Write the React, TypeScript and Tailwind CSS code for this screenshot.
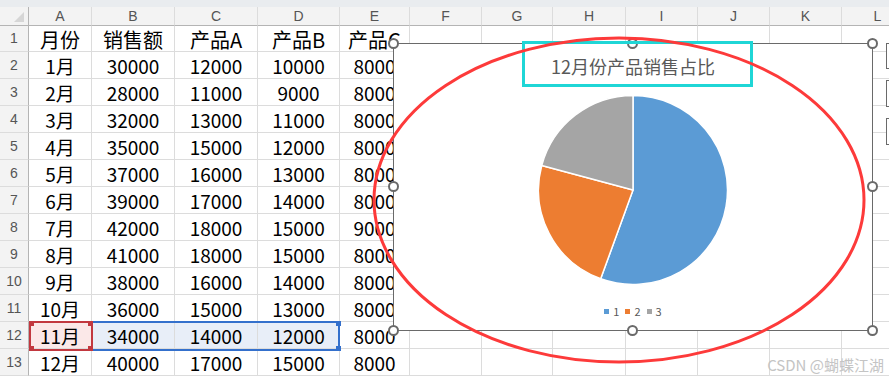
import React from "react";

const cols = ["A", "B", "C", "D", "E", "F", "G", "H", "I", "J", "K", "L"];

const rows: string[][] = [
  ["月份", "销售额", "产品A", "产品B", "产品C"],
  ["1月", "30000", "12000", "10000", "8000"],
  ["2月", "28000", "11000", "9000", "8000"],
  ["3月", "32000", "13000", "11000", "8000"],
  ["4月", "35000", "15000", "12000", "8000"],
  ["5月", "37000", "16000", "13000", "8000"],
  ["6月", "39000", "17000", "14000", "8000"],
  ["7月", "42000", "18000", "15000", "9000"],
  ["8月", "41000", "18000", "15000", "8000"],
  ["9月", "38000", "16000", "14000", "8000"],
  ["10月", "36000", "15000", "13000", "8000"],
  ["11月", "34000", "14000", "12000", "8000"],
  ["12月", "40000", "17000", "15000", "8000"],
];

const gridCols =
  "grid grid-cols-[29px_63px_83px_83px_82px_70px_72px_71px_73px_72px_72px_72px_72px]";

// 12月 data: 40000 / 17000 / 15000
const slices = [
  { v: 40000, color: "#5b9bd5" },
  { v: 17000, color: "#ed7d31" },
  { v: 15000, color: "#a5a5a5" },
];

function slicePath(cx: number, cy: number, r: number, a0: number, a1: number) {
  const p = (a: number) => [cx + r * Math.sin(a), cy - r * Math.cos(a)];
  const [x0, y0] = p(a0);
  const [x1, y1] = p(a1);
  const large = a1 - a0 > Math.PI ? 1 : 0;
  return `M${cx},${cy} L${x0},${y0} A${r},${r} 0 ${large} 1 ${x1},${y1} Z`;
}

function Pie() {
  const total = slices.reduce((s, x) => s + x.v, 0);
  let a = 0;
  return (
    <svg width="190" height="190" viewBox="0 0 190 190">
      {slices.map((s, i) => {
        const a0 = a;
        a += (s.v / total) * Math.PI * 2;
        return (
          <path
            key={i}
            d={slicePath(95, 95, 94.5, a0, a)}
            fill={s.color}
            stroke="#ffffff"
            strokeWidth="1.5"
            strokeLinejoin="round"
          />
        );
      })}
    </svg>
  );
}

const handle =
  "absolute w-[11px] h-[11px] rounded-full border-2 border-[#6a6a6a] bg-white";
const redSq = "absolute w-[5px] h-[5px] bg-[#c2383f]";
const blueSq = "absolute w-[5px] h-[5px] bg-[#3470cc]";

export default function App() {
  return (
    <div
      className="relative w-[889px] h-[380px] overflow-hidden bg-white"
      style={{ fontFamily: '"Noto Sans CJK SC", "Noto Sans", sans-serif' }}
    >
      <div className="h-[7px] bg-[#e9ecef]" />

      {/* column header */}
      <div className={gridCols}>
        <div className="h-[19px] bg-[#f3f3f3] border-b border-r border-[#b4b4b4] flex items-end justify-end pr-[4px] pb-[3px]">
          <div className="w-0 h-0 border-l-[10px] border-l-transparent border-b-[10px] border-b-[#d6d6d6]" />
        </div>
        {cols.map((c) => (
          <div
            key={c}
            className="h-[19px] bg-[#f3f3f3] border-b border-[#b4b4b4] border-r border-r-[#dcdcdc] flex items-center justify-center text-[14px] text-[#555] font-['Liberation_Sans']"
          >
            {c}
          </div>
        ))}
      </div>

      {/* rows */}
      {Array.from({ length: 13 }).map((_, r) => (
        <div key={r} className={gridCols}>
          <div
            className={`${r === 0 ? "h-[26px]" : "h-[27px]"} bg-[#f3f3f3] border-r border-[#b4b4b4] border-b border-b-[#dcdcdc] flex items-center justify-center text-[14px] text-[#555] font-['Liberation_Sans']`}
          >
            {r + 1}
          </div>
          {cols.map((c, ci) => {
            const txt = rows[r][ci] ?? "";
            let bg = "";
            if (r === 11 && ci === 0) bg = "bg-[#fbe8e8]";
            if (r === 11 && ci >= 1 && ci <= 3) bg = "bg-[#e8eef8]";
            return (
              <div
                key={c}
                className={`${r === 0 ? "h-[26px] text-[20px]" : "h-[27px] text-[19px]"} ${bg} border-r border-b border-[#dcdcdc] flex items-center justify-center text-black whitespace-nowrap pt-[2px]`}
              >
                {txt}
              </div>
            );
          })}
        </div>
      ))}

      {/* selection on row 12 */}
      <div className="absolute left-[29px] top-[321px] w-[64px] h-[30px] border-2 border-[#c2383f]">
        <span className={`${redSq} -left-[2px] -top-[2px]`} />
        <span className={`${redSq} -right-[2px] -top-[2px]`} />
        <span className={`${redSq} -left-[2px] -bottom-[2px]`} />
        <span className={`${redSq} -right-[2px] -bottom-[2px]`} />
      </div>
      <div className="absolute left-[93px] top-[321px] w-[247px] h-[30px] border-2 border-l-0 border-[#3470cc]">
        <span className={`${blueSq} -right-[3px] -top-[2px]`} />
        <span className={`${blueSq} -right-[3px] -bottom-[2px]`} />
      </div>

      {/* chart */}
      <div className="absolute left-[393px] top-[43px] w-[480px] h-[288px] border border-[#6a6a6a] bg-white">
        <div className="flex flex-col items-center">
          <div className="mt-[10px] text-[18px] leading-[24px] text-[#595959]">
            12月份产品销售占比
          </div>
          <div className="mt-[17px]">
            <Pie />
          </div>
          <div className="mt-[19px] flex items-center gap-[6px] text-[11px] leading-[14px] text-[#595959]">
            {slices.map((s, i) => (
              <div key={i} className="flex items-center gap-[4px]">
                <span className="w-[5px] h-[5px]" style={{ background: s.color }} />
                <span>{i + 1}</span>
              </div>
            ))}
          </div>
        </div>
        <span className={`${handle} -left-[6px] -top-[6px]`} />
        <span className={`${handle} left-[233px] -top-[6px]`} />
        <span className={`${handle} -right-[6px] -top-[6px]`} />
        <span className={`${handle} -left-[6px] top-[137px]`} />
        <span className={`${handle} -right-[6px] top-[137px]`} />
        <span className={`${handle} -left-[6px] -bottom-[6px]`} />
        <span className={`${handle} left-[233px] -bottom-[6px]`} />
        <span className={`${handle} -right-[6px] -bottom-[6px]`} />
      </div>

      {/* chart side buttons */}
      <div className="absolute left-[886px] top-[43px] flex flex-col gap-[11px]">
        <div className="w-[26px] h-[26px] border border-[#6a6a6a] bg-white" />
        <div className="w-[26px] h-[27px] border border-[#6a6a6a] bg-white" />
        <div className="w-[26px] h-[27px] border border-[#6a6a6a] bg-white" />
      </div>

      {/* annotations */}
      <div className="absolute left-[522px] top-[41px] w-[231px] h-[46px] border-[3px] border-[#1fd6d6]" />
      <svg className="absolute left-0 top-0 pointer-events-none" width="889" height="380">
        <ellipse cx="619" cy="200" rx="245" ry="162" fill="none" stroke="#fd3a3a" strokeWidth="3" />
      </svg>

      <div className="absolute right-[5px] bottom-[5px] text-[15px] leading-[20px] text-[#c4c4c4]">
        CSDN @蝴蝶江湖
      </div>
    </div>
  );
}
